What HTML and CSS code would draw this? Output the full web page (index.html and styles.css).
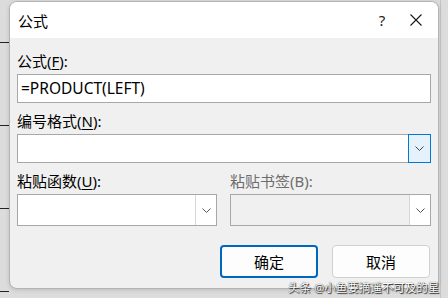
FILE: index.html
```html
<!DOCTYPE html>
<html lang="zh-CN">

<head>
  <meta charset="UTF-8" />
  <meta name="viewport" content="width=device-width, initial-scale=1.0" />
  <title>公式</title>
  <link rel="stylesheet" href="styles.css">
</head>

<body>
  <div class="desk">
    <div class="dialog">
      <header class="titlebar">
        <div class="title">公式</div>
        <div class="help">?</div>
        <div class="close">
          <svg width="12" height="12" viewBox="0 0 12 12"><path d="M0.5 0.5 L11.5 11.5 M11.5 0.5 L0.5 11.5" stroke="#1a1a1a" stroke-width="1.1" fill="none" /></svg>
        </div>
      </header>

      <section class="body">
        <div class="field">
          <label>公式(<u>F</u>):</label>
          <div class="input">=PRODUCT(LEFT)</div>
        </div>

        <div class="field">
          <label>编号格式(<u>N</u>):</label>
          <div class="combo">
            <div class="combo-text"></div>
            <div class="drop active">
              <svg width="9" height="5" viewBox="0 0 9 5"><path d="M0.5 0.5 L4.5 4.5 L8.5 0.5" stroke="#444" stroke-width="1" fill="none" /></svg>
            </div>
          </div>
        </div>

        <div class="row">
          <div class="field">
            <label>粘贴函数(<u>U</u>):</label>
            <div class="combo tall">
              <div class="combo-text"></div>
              <div class="drop">
                <svg width="9" height="5" viewBox="0 0 9 5"><path d="M0.5 0.5 L4.5 4.5 L8.5 0.5" stroke="#555" stroke-width="1" fill="none" /></svg>
              </div>
            </div>
          </div>
          <div class="field disabled">
            <label>粘贴书签(B):</label>
            <div class="combo tall">
              <div class="combo-text"></div>
              <div class="drop">
                <svg width="9" height="5" viewBox="0 0 9 5"><path d="M0.5 0.5 L4.5 4.5 L8.5 0.5" stroke="#555" stroke-width="1" fill="none" /></svg>
              </div>
            </div>
          </div>
        </div>

        <div class="buttons">
          <div class="btn primary">确定</div>
          <div class="btn">取消</div>
        </div>
      </section>
    </div>
    <div class="watermark">头条 @小鱼要摘遥不可及的星</div>
  </div>
</body>

</html>
```

FILE: styles.css
```css
body {
  margin: 0;
  font-family: "Segoe UI", "Noto Sans", "Noto Sans CJK SC", sans-serif;
  color: #000;
}

.desk {
  position: relative;
  width: 448px;
  height: 298px;
  overflow: hidden;
  background:
    repeating-linear-gradient(to bottom, transparent 0, transparent 42px, #222 42px, #222 43px, transparent 43px, transparent 83px) left top / 9px 100% no-repeat,
    linear-gradient(to right, #c4c4c4 0, #c4c4c4 1px, transparent 1px) 440px 0 / 1px 100% no-repeat,
    #dcdcdc;
  padding: 1px 0 0 9px;
  box-sizing: border-box;
}

.dialog {
  width: 430px;
  height: 288px;
  background: #f0f0f0;
  border: 1px solid #b4b4b4;
  border-radius: 8px;
  box-sizing: border-box;
  overflow: hidden;
  box-shadow: 0 1px 4px rgba(0, 0, 0, 0.15);
}

.titlebar {
  height: 36px;
  background: #fff;
  display: flex;
  align-items: center;
  padding-left: 8px;
}

.title {
  font-size: 15px;
  flex: 1;
}

.help {
  width: 20px;
  text-align: center;
  font-size: 15px;
  color: #222;
  margin-right: 14px;
}

.close {
  width: 20px;
  display: flex;
  justify-content: center;
  margin-right: 12px;
}

.body {
  padding: 13px 7px 0 7px;
  display: flex;
  flex-direction: column;
  gap: 8px;
}

.field {
  display: flex;
  flex-direction: column;
  gap: 3px;
}

.field label {
  height: 20px;
  line-height: 20px;
  font-size: 15px;
}

.field u {
  text-underline-offset: 2px;
}

.disabled label {
  color: #6d6d6d;
}

.input {
  height: 29px;
  background: #fff;
  border: 1px solid #a8a8a8;
  box-sizing: border-box;
  font-size: 15.5px;
  line-height: 27px;
  padding-left: 3px;
}

.combo {
  height: 29px;
  background: #fff;
  border: 1px solid #a8a8a8;
  box-sizing: border-box;
  display: flex;
}

.combo.tall {
  height: 32px;
}

.combo-text {
  flex: 1;
}

.drop {
  width: 21px;
  border-left: 1px solid #d6d6d6;
  background: #fff;
  display: flex;
  align-items: center;
  justify-content: center;
  box-sizing: border-box;
}

.drop.active {
  border: 1px solid #0078d7;
  background: #e5f1fb;
  margin: -1px -1px -1px 0;
  width: 23px;
}

.disabled .combo {
  background: #f0f0f0;
}

.row {
  display: grid;
  grid-template-columns: 200px 201px;
  gap: 13px;
}

.buttons {
  display: flex;
  justify-content: flex-end;
  gap: 14px;
  margin-top: 11px;
  padding-right: 1px;
}

.btn {
  width: 98px;
  height: 33px;
  box-sizing: border-box;
  border: 1px solid #d0d0d0;
  border-radius: 4px;
  background: #fdfdfd;
  font-size: 15px;
  display: flex;
  align-items: center;
  justify-content: center;
}

.btn.primary {
  border: 2px solid #0067c0;
}

.watermark {
  position: absolute;
  left: 288px;
  top: 279px;
  font-size: 11.5px;
  color: #fff;
  text-shadow: 0 0 1px #222, 1px 1px 1px #222;
  white-space: nowrap;
}
```
